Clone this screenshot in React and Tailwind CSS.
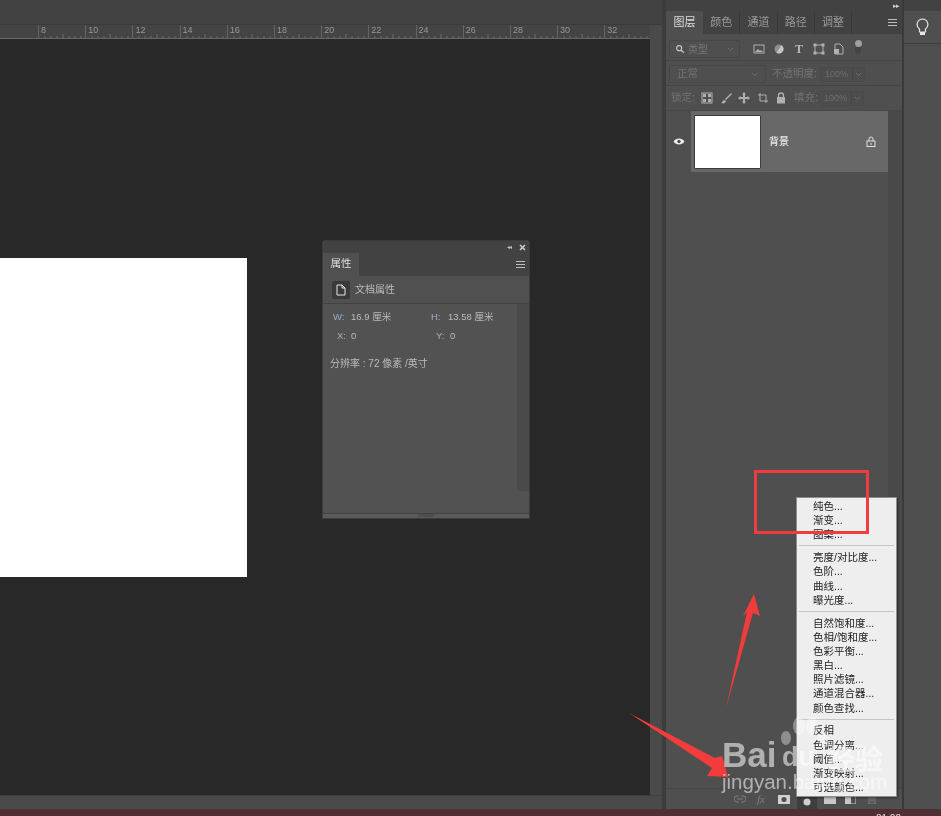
const cjk = { fontFamily: '"Liberation Sans","Noto Sans CJK SC",sans-serif' };

function Ruler() {
  const nums = [8, 10, 12, 14, 16, 18, 20, 22, 24, 26, 28, 30, 32];
  return (
    <div className="h-[14px] flex pl-[38px] bg-[#444444] border-b border-[#686868] overflow-hidden">
      {nums.map((n) => (
        <div key={n} className="relative w-[47.2px] shrink-0 border-l border-[#646464] pl-[2px] text-[9px] leading-[11px] text-[#989898]">
          {n}
          <svg className="absolute left-0 bottom-0" width="47" height="4">
            {[6, 12, 18, 24, 30, 36, 42].map((x, i) => (
              <line key={x} x1={x} x2={x} y1={i === 3 ? 0 : 2} y2="4" stroke="#6c6c6c" strokeWidth="1" />
            ))}
          </svg>
        </div>
      ))}
    </div>
  );
}

function Caret() {
  return (
    <svg width="7" height="5" viewBox="0 0 7 5" className="shrink-0">
      <path d="M1 1l2.500 2.500L6 1" fill="none" stroke="#6e6e6e" strokeWidth="1" />
    </svg>
  );
}

function Percent() {
  return (
    <div className="flex h-[15px] border border-[#4a4a4a] bg-[#4d4d4d] text-[9px] leading-[13px] text-[#6e6e6e]">
      <span className="w-[31px] text-center">100%</span>
      <span className="w-[12px] border-l border-[#444444] flex items-center justify-center"><Caret /></span>
    </div>
  );
}

function Ico({ children, w = 12, h = 12, vb = "0 0 12 12" }) {
  return <svg width={w} height={h} viewBox={vb} className="shrink-0">{children}</svg>;
}

function LayersPanel() {
  const tabs = ["颜色", "通道", "路径", "调整"];
  return (
    <div className="w-[236px] shrink-0 flex flex-col bg-[#4f4f4f]">
      <div className="h-[11px] bg-[#424242] flex justify-end items-center pr-[3px] text-[7px] leading-none text-[#cfcfcf] tracking-[-1px]">▸▸</div>
      <div className="h-[23px] flex bg-[#424242] text-[11px] leading-[23px] text-[#9a9a9a]">
        <div className="w-[37px] text-center bg-[#4f4f4f] text-[#dedede]">图层</div>
        {tabs.map((t) => (
          <div key={t} className="w-[37.300px] text-center border-r border-[#383838]">{t}</div>
        ))}
        <div className="ml-auto mr-[5px] mt-[8px] w-[9px] h-[7px] border-y border-[#bdbdbd] flex items-center">
          <div className="w-full h-px bg-[#bdbdbd]" />
        </div>
      </div>
      <div className="h-[27px] flex items-center pl-[3px] pt-[4px] border-b border-[#444444]">
        <div className="w-[71px] h-[18px] flex items-center gap-[3px] px-[5px] border border-[#474747] rounded-[2px] text-[10px] text-[#757575]">
          <Ico w={10} h={10}><circle cx="5" cy="5" r="3" fill="none" stroke="#c4c4c4" strokeWidth="1.400" /><path d="M7 7l3.500 3.500" stroke="#c4c4c4" strokeWidth="1.600" /></Ico>
          <span>类型</span>
          <span className="ml-auto"><Caret /></span>
        </div>
        <div className="flex items-center ml-[13px] gap-[8px]">
          <Ico><rect x="1" y="2" width="10" height="8" fill="none" stroke="#b0b0b0" /><path d="M2 9l3-3 2 2 1-1 2 2z" fill="#b0b0b0" /></Ico>
          <Ico><circle cx="6" cy="6" r="4.500" fill="#8e8e8e" /><path d="M6 1.500a4.500 4.500 0 0 1 0 9z" fill="#c4c4c4" transform="rotate(35 6 6)" /></Ico>
          <span className="w-[12px] text-center text-[12px] font-bold leading-none text-[#b8b8b8]" style={{ fontFamily: '"Liberation Serif",serif' }}>T</span>
          <Ico><rect x="2" y="2" width="8" height="8" fill="none" stroke="#b0b0b0" /><path d="M0.500 0.500h3v3h-3zM8.500 0.500h3v3h-3zM0.500 8.500h3v3h-3zM8.500 8.500h3v3h-3z" fill="#b0b0b0" /></Ico>
          <Ico><path d="M2 1h5l3 3v7H2z" fill="none" stroke="#b0b0b0" /><rect x="1" y="6" width="5" height="5" fill="#b0b0b0" /></Ico>
          <div className="relative ml-[2px] -mt-[3px] w-[6px] h-[13px] rounded-full bg-[#454545]"><div className="absolute -top-[1px] -left-[0.500px] w-[7px] h-[7px] rounded-full bg-[#a0a0a0]" /></div>
        </div>
      </div>
      <div className="h-[25px] flex items-center pl-[3px] pt-[2px] border-b border-[#444444] text-[10.500px] text-[#737373]">
        <div className="w-[97px] h-[18px] flex items-center justify-between px-[7px] border border-[#474747] rounded-[2px]">
          <span>正常</span><Caret />
        </div>
        <span className="ml-[6px] w-[45px] whitespace-nowrap">不透明度:</span>
        <span className="ml-[3px]"><Percent /></span>
      </div>
      <div className="h-[25px] flex items-center pl-[5px] border-b border-[#474747] text-[10.500px] text-[#737373]">
        <span className="w-[24px] whitespace-nowrap">锁定:</span>
        <div className="flex items-center gap-[6.500px] ml-[6px]">
          <Ico><rect x="1" y="1" width="10" height="10" fill="none" stroke="#b0b0b0" /><path d="M2 2h3v3H2zM7 2h3v3H7zM2 7h3v3H2zM7 7h3v3H7z" fill="#b0b0b0" /></Ico>
          <Ico><path d="M11 1L5 7l1 1 6-6zM4 8c-2 0-1 3-3 3 2 1 5 0 5-2z" fill="#b0b0b0" /></Ico>
          <Ico><path d="M6 0l2 2.500H7V5h2.500V4L12 6 9.500 8V7H7v2.500h1L6 12 4 9.500h1V7H2.500v1L0 6l2.500-2v1H5V2.500H4z" fill="#b0b0b0" /></Ico>
          <Ico><path d="M3 1v8h8M1 3h8v8" fill="none" stroke="#b0b0b0" /></Ico>
          <Ico><path d="M3.500 5V3.500a2.500 2.500 0 0 1 5 0V5" fill="none" stroke="#b0b0b0" strokeWidth="1.300" /><rect x="2" y="5" width="8" height="6.500" fill="#b0b0b0" /></Ico>
        </div>
        <span className="ml-[7px] w-[24px] whitespace-nowrap">填充:</span>
        <span className="ml-[1px]"><Percent /></span>
      </div>
      <div className="flex-1 flex min-h-0">
        <div className="flex-1 flex flex-col">
          <div className="h-[61px] flex">
            <div className="w-[25px] flex items-center justify-center">
              <Ico w={12} h={9} vb="0 0 12 9"><path d="M0.500 4.500C3 0.500 9 0.500 11.500 4.500 9 8.500 3 8.500 0.500 4.500z" fill="#eeeeee" /><circle cx="6" cy="4.500" r="1.700" fill="#505050" /></Ico>
            </div>
            <div className="flex-1 bg-[#686868] flex items-center pl-[3px] pr-[12px]">
              <div className="w-[67px] h-[54px] bg-white border border-[#3c3c3c] rounded-[1px]" />
              <span className="ml-[8px] text-[10px] font-medium text-[#e8e8e8]">背景</span>
              <span className="ml-auto">
                <Ico w={10} h={11} vb="0 0 10 11"><path d="M3 5V3a2 2 0 0 1 4 0v2" fill="none" stroke="#e0e0e0" /><rect x="1" y="5" width="8" height="5.500" fill="none" stroke="#e0e0e0" /><rect x="4.500" y="7" width="1" height="2" fill="#e0e0e0" /></Ico>
              </span>
            </div>
          </div>
        </div>
        <div className="w-[14px] bg-[#494949]" />
      </div>
      <div className="h-[21px] bg-[#4f4f4f] border-t border-[#454545] flex items-center pl-[68px]">
        <Ico w={12} h={8} vb="0 0 12 8"><path d="M5 1H3a3 3 0 0 0 0 6h2M7 1h2a3 3 0 0 1 0 6H7M3 4h6" fill="none" stroke="#7e7e7e" /></Ico>
        <span className="ml-[11px] w-[11px] text-[11px] italic leading-none text-[#7e7e7e]" style={{ fontFamily: '"Liberation Serif",serif' }}>fx</span>
        <span className="ml-[10px]"><Ico w={12} h={9} vb="0 0 12 9"><path fillRule="evenodd" d="M0 0h12v9H0zM6 2a2.500 2.500 0 1 0 0 5 2.500 2.500 0 0 0 0-5z" fill="#d0d0d0" /></Ico></span>
        <div className="ml-[7px] w-[20px] h-full bg-[#3e3e3e] flex items-end justify-center pb-[3px]">
          <Ico w={8} h={8} vb="0 0 8 8"><circle cx="4" cy="4" r="3.500" fill="#d0d0d0" /></Ico>
        </div>
        <span className="ml-[7px]"><Ico w={12} h={9} vb="0 0 12 9"><path d="M0 1h5l1 1h6v7H0z" fill="#c8c8c8" /></Ico></span>
        <span className="ml-[9px]"><Ico w={11} h={10} vb="0 0 11 10"><path d="M3 0h5l3 3v7H3z" fill="none" stroke="#c8c8c8" /><rect x="0" y="3" width="6" height="7" fill="#c8c8c8" /></Ico></span>
        <span className="ml-[11px]"><Ico w={10} h={10} vb="0 0 10 10"><path d="M1 1h8M2 2v8h6V2M4 3v5M6 3v5" fill="none" stroke="#7e7e7e" /></Ico></span>
      </div>
    </div>
  );
}

function PropertiesPanel() {
  return (
    <div className="absolute left-[322px] top-[240px] w-[208px] h-[279px] bg-[#525252] border border-[#3c3c3c] rounded-t-[3px] flex flex-col text-[#bcbcbc]">
      <div className="h-[12px] bg-[#424242] flex items-center justify-end gap-[8px] pr-[3px] rounded-t-[3px]">
        <span className="text-[6px] leading-none tracking-[-1px] text-[#bdbdbd]">◂◂</span>
        <svg width="7" height="7" viewBox="0 0 7 7"><path d="M1 1l5 5M6 1L1 6" stroke="#d0d0d0" strokeWidth="1.500" /></svg>
      </div>
      <div className="h-[23px] flex bg-[#424242]">
        <div className="w-[36px] bg-[#505050] text-center text-[10.500px] leading-[21px] text-[#dedede]">属性</div>
        <div className="ml-auto mr-[4px] mt-[8px] w-[9px] h-[7px] border-y border-[#bdbdbd] flex items-center"><div className="w-full h-px bg-[#bdbdbd]" /></div>
      </div>
      <div className="h-[28px] flex items-center pl-[9px] gap-[5px] border-b border-[#424242] bg-[#505050] text-[10px]">
        <div className="w-[18px] h-[18px] bg-[#3a3a3a] rounded-[2px] flex items-center justify-center">
          <svg width="10" height="12" viewBox="0 0 10 12"><path d="M1 1h5l3 3v7H1zM6 1v3h3" fill="none" stroke="#e6e6e6" /></svg>
        </div>
        <span>文档属性</span>
      </div>
      <div className="flex-1 flex min-h-0">
        <div className="flex-1 pt-[6px] text-[9.500px] leading-[14px]">
          <div className="grid grid-cols-[98px_1fr] pl-[10px]">
            <div className="flex"><span className="w-[18px] text-[#9fb0c4]">W:</span><span>16.9 厘米</span></div>
            <div className="flex"><span className="w-[17px] text-[#9fb0c4]">H:</span><span>13.58 厘米</span></div>
          </div>
          <div className="grid grid-cols-[99px_1fr] pl-[14px] mt-[5px]">
            <div className="flex"><span className="w-[14px] text-[#9fb0c4]">X:</span><span>0</span></div>
            <div className="flex"><span className="w-[14px] text-[#9fb0c4]">Y:</span><span>0</span></div>
          </div>
          <div className="pl-[7px] mt-[14px] text-[10px]">分辨率 : 72 像素 /英寸</div>
        </div>
        <div className="w-[12px] mb-[22px] bg-[#4a4a4a]" />
      </div>
      <div className="h-[5px] border-t border-[#424242] bg-[#5a5a5a] flex justify-center"><div className="w-[16px] h-[3px] bg-[#4e4e4e]" /></div>
    </div>
  );
}

function ContextMenu() {
  const groups = [
    ["纯色...", "渐变...", "图案..."],
    ["亮度/对比度...", "色阶...", "曲线...", "曝光度..."],
    ["自然饱和度...", "色相/饱和度...", "色彩平衡...", "黑白...", "照片滤镜...", "通道混合器...", "颜色查找..."],
    ["反相", "色调分离...", "阈值...", "渐变映射...", "可选颜色..."],
  ];
  return (
    <div className="absolute left-[796px] top-[497px] w-[101px] h-[300px] bg-[#eeeeee] border border-[#8e8e8e] pt-[1px] shadow-[1px_1px_2px_rgba(0,0,0,0.4)]">
      {groups.map((g, i) => (
        <div key={i}>
          {i > 0 && <div className="h-px bg-[#c6c6c6] mx-[2px] my-[3.800px]" />}
          {g.map((t) => (
            <div key={t} className="h-[14.200px] pl-[16px] text-[10.500px] leading-[14px] text-[#222222] whitespace-nowrap">{t}</div>
          ))}
        </div>
      ))}
    </div>
  );
}

function Watermark() {
  return (
    <div className="absolute left-[722px] top-[716px] w-[175px] h-[82px] text-white/55 pointer-events-none" style={{ fontFamily: '"Liberation Sans",sans-serif' }}>
      <span className="absolute left-0 top-[19px] text-[35px] font-bold leading-[40px]">Bai</span>
      <svg className="absolute left-[56px] top-0" width="52" height="56" viewBox="0 0 52 56" fill="currentColor" opacity="0.65">
        <ellipse cx="8" cy="22" rx="5" ry="7" />
        <ellipse cx="21" cy="10" rx="6" ry="9" />
        <ellipse cx="34" cy="10" rx="6" ry="9" />
        <ellipse cx="45" cy="24" rx="5" ry="7" />
      </svg>
      <span className="absolute left-[60px] top-[26px] text-[27px] font-bold leading-[30px]">du</span>
      <span className="absolute left-[105px] top-[30px] text-[28px] font-bold leading-[30px] whitespace-nowrap" style={cjk}>经验</span>
      <span className="absolute left-0 top-[51px] text-[20.500px] leading-[30px] whitespace-nowrap">jingyan.baidu.com</span>
    </div>
  );
}

function Annotations() {
  return (
    <>
      <div className="absolute left-[754px] top-[470px] w-[115px] h-[64px] border-[3px] border-[#f03c3c]" />
      <svg className="absolute left-[620px] top-[590px]" width="150" height="195" viewBox="620 590 150 195">
        <path d="M629 713L715 758 722 756 728 777 707 776 712 768z" fill="#f23b3b" />
        <path d="M726 708L747 612 743 616 754 594 760 616 753 613z" fill="#f23b3b" />
      </svg>
    </>
  );
}

export default function App() {
  return (
    <div className="relative w-[941px] h-[816px] overflow-hidden flex flex-col bg-[#404040] blur-[0.5px]" style={cjk}>
      <div className="flex-1 flex min-h-0">
        <div className="flex-1 min-w-0 flex flex-col">
          <div className="h-[25px] bg-[#424242] border-b border-[#3a3a3a]" />
          <div className="flex-1 min-h-0 flex">
            <div className="flex-1 min-w-0 flex flex-col">
              <Ruler />
              <div className="flex-1 bg-[#282828]" />
            </div>
            <div className="w-[12px] bg-[#4a4a4a]" />
          </div>
          <div className="h-[14px] bg-[#4a4a4a] border-t border-[#3f3f3f]" />
        </div>
        <div className="w-[4px] bg-[#3c3c3c]" />
        <LayersPanel />
        <div className="w-[2px] bg-[#3a3a3a]" />
        <div className="w-[37px] shrink-0 flex flex-col bg-[#4f4f4f]">
          <div className="h-[11px] bg-[#424242]" />
          <div className="h-[33px] border-b border-[#3c3c3c] flex items-center justify-center">
            <svg width="13" height="18" viewBox="0 0 13 18">
              <path d="M6.500 1a5.500 5.500 0 0 0-3 10v3h6v-3a5.500 5.500 0 0 0-3-10z" fill="none" stroke="#e6e6e6" strokeWidth="1.200" />
              <rect x="4" y="14" width="5" height="3" fill="#e6e6e6" />
            </svg>
          </div>
        </div>
      </div>
      <div className="h-[7px] bg-[#4f2f33] overflow-hidden flex justify-end pr-[40px] pt-[5px] text-[10px] leading-none text-[#dddddd]">21:22</div>
      <div className="absolute left-0 top-[258px] w-[247px] h-[319px] bg-white" />
      <PropertiesPanel />
      <ContextMenu />
      <Annotations />
      <Watermark />
    </div>
  );
}
